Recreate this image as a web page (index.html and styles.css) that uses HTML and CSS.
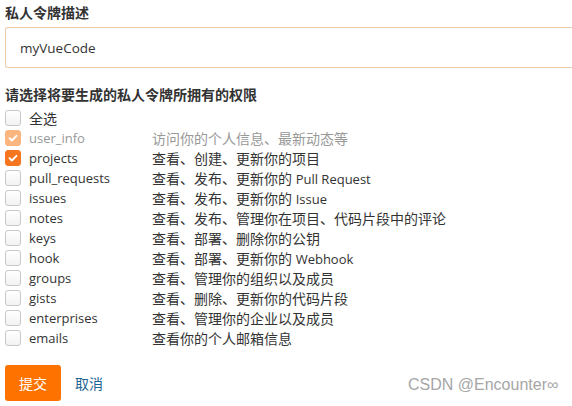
FILE: index.html
```html
<!DOCTYPE html>
<html lang="zh">
<head>
<meta charset="utf-8">
<link rel="stylesheet" href="styles.css">
</head>
<body>
<div class="page">
  <div class="label">私人令牌描述</div>
  <div class="input">myVueCode</div>
  <div class="label heading">请选择将要生成的私人令牌所拥有的权限</div>
  <div class="list">
    <div class="row"><span class="cb"></span><span class="name cn">全选</span></div>
    <div class="row disabled"><span class="cb checked"><svg viewBox="0 0 16 16"><path d="M4 8.2l2.7 2.6L12 5.5" /></svg></span><span class="name">user_info</span><span class="desc">访问你的个人信息、最新动态等</span></div>
    <div class="row"><span class="cb checked"><svg viewBox="0 0 16 16"><path d="M4 8.2l2.7 2.6L12 5.5" /></svg></span><span class="name">projects</span><span class="desc">查看、创建、更新你的项目</span></div>
    <div class="row"><span class="cb"></span><span class="name">pull_requests</span><span class="desc">查看、发布、更新你的 <span class="en">Pull Request</span></span></div>
    <div class="row"><span class="cb"></span><span class="name">issues</span><span class="desc">查看、发布、更新你的 <span class="en">Issue</span></span></div>
    <div class="row"><span class="cb"></span><span class="name">notes</span><span class="desc">查看、发布、管理你在项目、代码片段中的评论</span></div>
    <div class="row"><span class="cb"></span><span class="name">keys</span><span class="desc">查看、部署、删除你的公钥</span></div>
    <div class="row"><span class="cb"></span><span class="name">hook</span><span class="desc">查看、部署、更新你的 <span class="en">Webhook</span></span></div>
    <div class="row"><span class="cb"></span><span class="name">groups</span><span class="desc">查看、管理你的组织以及成员</span></div>
    <div class="row"><span class="cb"></span><span class="name">gists</span><span class="desc">查看、删除、更新你的代码片段</span></div>
    <div class="row"><span class="cb"></span><span class="name">enterprises</span><span class="desc">查看、管理你的企业以及成员</span></div>
    <div class="row"><span class="cb"></span><span class="name">emails</span><span class="desc">查看你的个人邮箱信息</span></div>
  </div>
  <div class="actions">
    <span class="btn">提交</span>
    <span class="cancel">取消</span>
  </div>
</div>
<div class="watermark">CSDN @Encounter∞</div>
</body>
</html>
```
FILE: styles.css
```css
html, body {
  margin: 0;
  padding: 0;
  background: #fff;
}
body {
  font-family: "Open Sans", "Noto Sans CJK SC", sans-serif;
  font-size: 13px;
  color: #333;
  width: 572px;
  height: 406px;
  overflow: hidden;
  position: relative;
}
.page {
  padding: 3px 0 0 5px;
}
.label {
  font-weight: bold;
  font-size: 14px;
  line-height: 20px;
  height: 20px;
  color: #333;
}
.heading {
  margin-top: 17px;
}
.input {
  margin-top: 4px;
  box-sizing: border-box;
  height: 41px;
  border: 1px solid #efcbaa;
  border-right: none;
  border-radius: 3px 0 0 3px;
  padding-left: 14px;
  display: flex;
  align-items: center;
  font-size: 13.5px;
  color: #333;
}
.list {
  margin-top: 3px;
}
.row {
  display: flex;
  align-items: center;
  height: 20px;
}
.cb {
  width: 16px;
  height: 16px;
  box-sizing: border-box;
  border: 1px solid #c8c8c8;
  border-radius: 3px;
  background: linear-gradient(#fff, #f2f2f2);
  flex: none;
  display: flex;
  align-items: center;
  justify-content: center;
}
.cb.checked {
  background: #f6761f;
  border-color: #f6761f;
}
.cb svg {
  width: 14px;
  height: 14px;
  fill: none;
  stroke: #fff;
  stroke-width: 2.2;
  stroke-linecap: round;
  stroke-linejoin: round;
}
.disabled .cb.checked {
  background: #fbb680;
  border-color: #fbb680;
}
.disabled .name, .disabled .desc {
  color: #999;
}
.name {
  margin-left: 8px;
  width: 123px;
  flex: none;
}
.name.cn {
  font-size: 14px;
}
.desc {
  color: #333;
  font-size: 14px;
}
.desc .en {
  font-size: 13px;
}
.actions {
  margin-top: 17px;
  display: flex;
  align-items: center;
}
.btn {
  width: 56px;
  height: 36px;
  background: #fe7300;
  color: #fff;
  border-radius: 3px;
  display: flex;
  align-items: center;
  justify-content: center;
  font-size: 14px;
}
.cancel {
  margin-left: 14px;
  color: #1d6592;
  font-size: 14px;
}
.watermark {
  position: absolute;
  left: 408px;
  top: 376px;
  font-family: "Liberation Sans", Arial, sans-serif;
  font-size: 16px;
  color: #a6a6a6;
  line-height: 18px;
}
```
